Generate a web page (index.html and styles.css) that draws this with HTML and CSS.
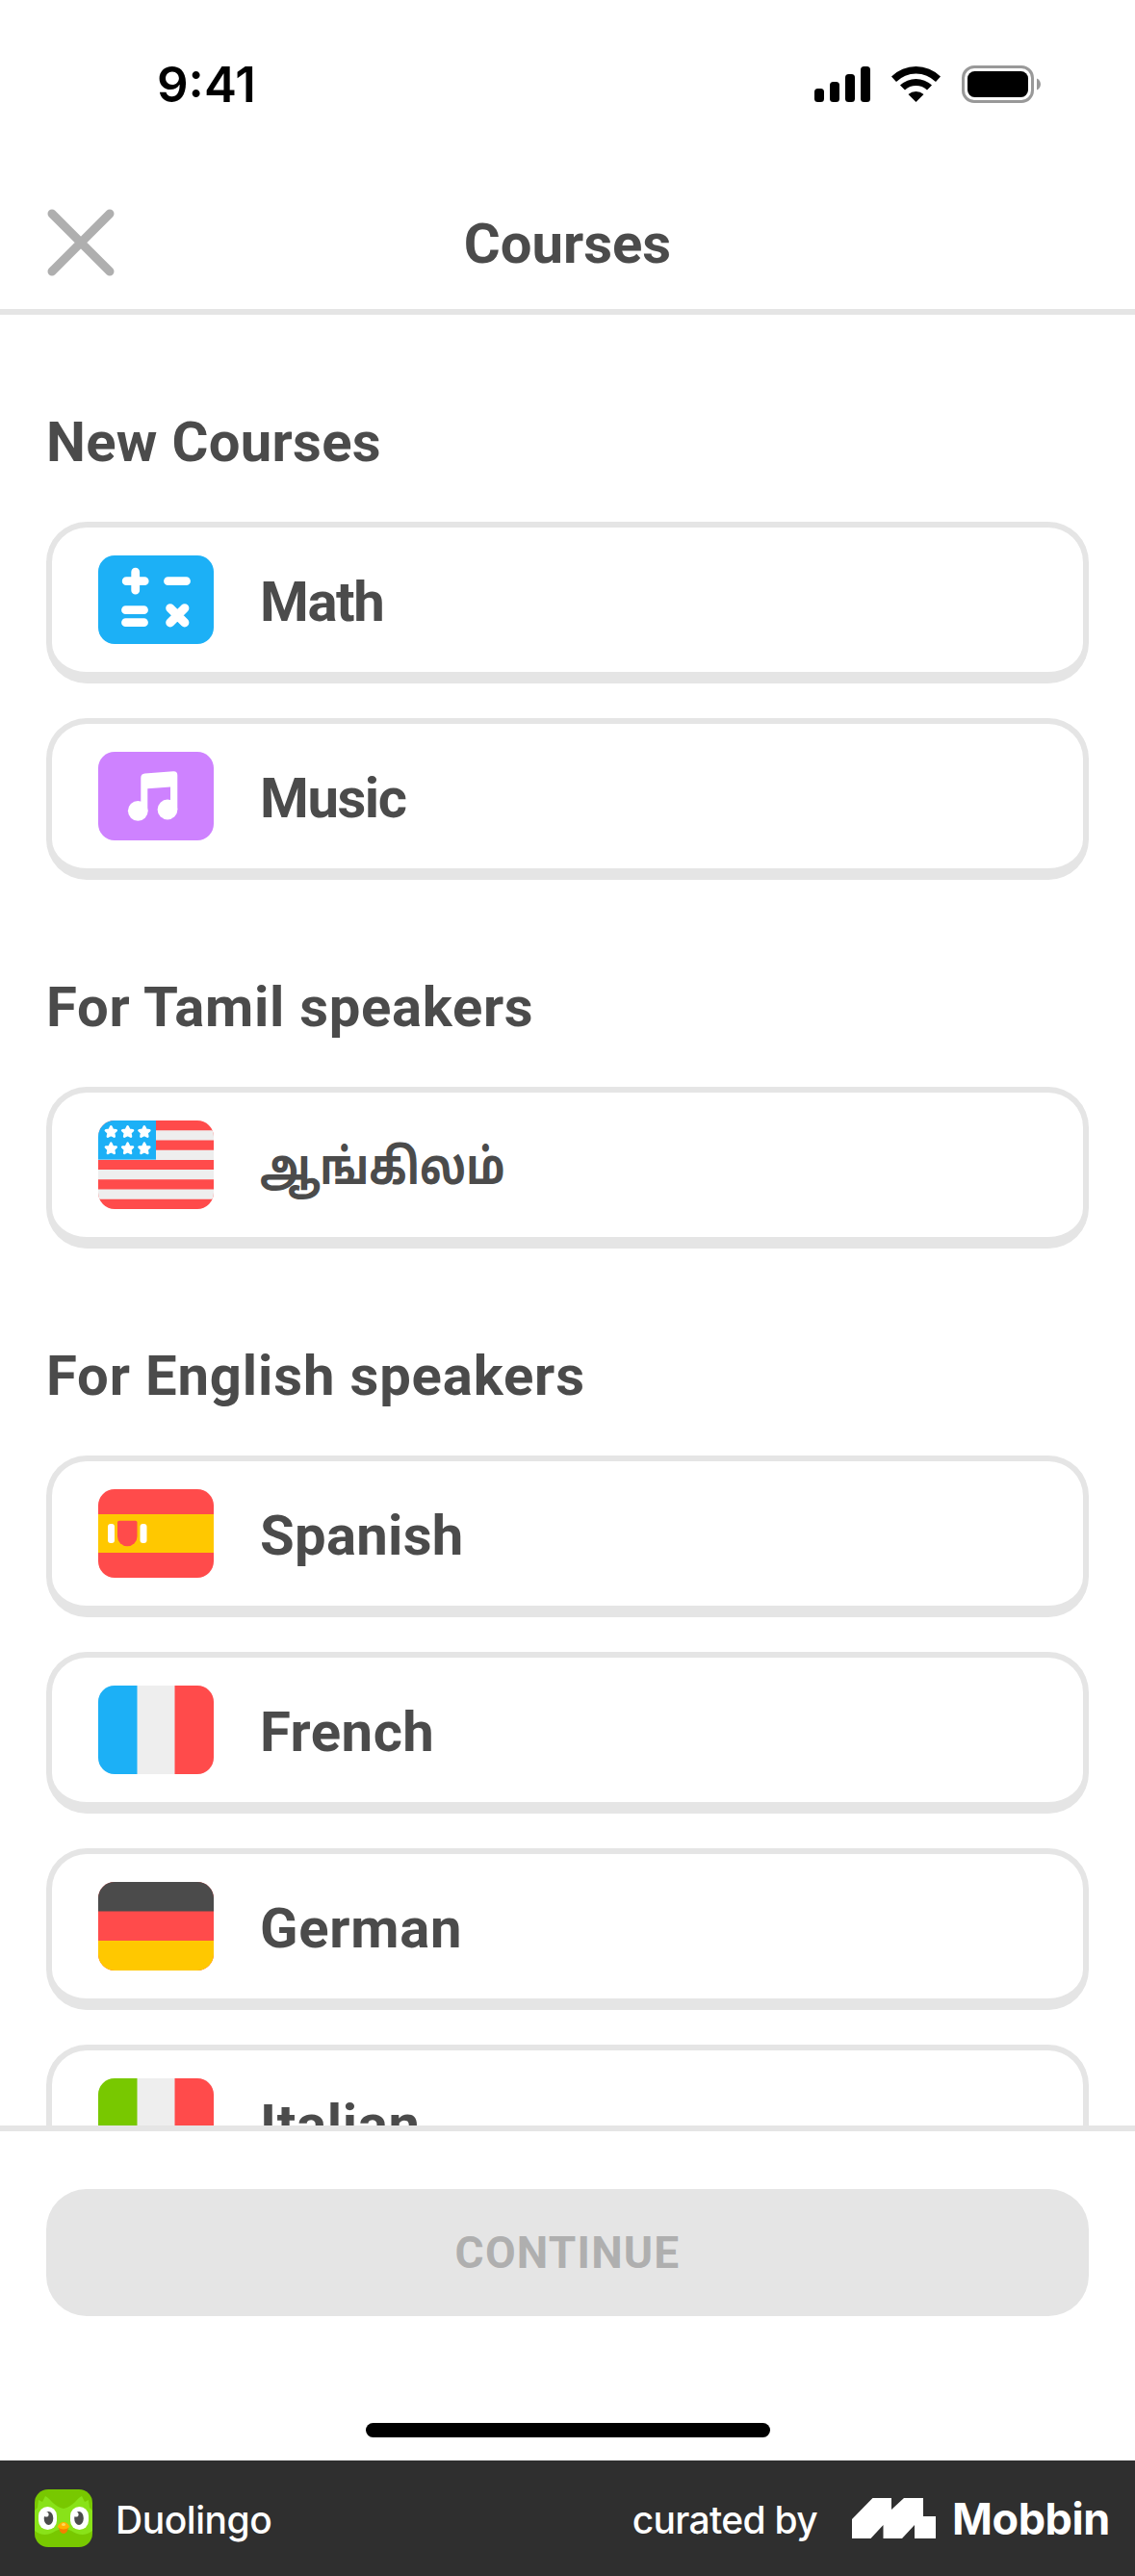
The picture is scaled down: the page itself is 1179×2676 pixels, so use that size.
FILE: index.html
```html
<!DOCTYPE html>
<html lang="en">
<head>
<meta charset="utf-8">
<title>Courses</title>
<link rel="stylesheet" href="styles.css">
</head>
<body>
<div class="screen">
  <div class="status">
    <span class="time">9:41</span>
    <svg class="status-icons" width="238" height="42" viewBox="0 0 238 42">
      <rect x="2" y="25" width="10" height="14" rx="3.5"/>
      <rect x="18" y="18" width="10" height="21" rx="3.5"/>
      <rect x="34" y="10" width="10" height="29" rx="3.5"/>
      <rect x="50" y="2" width="10" height="37" rx="3.5"/>
      <path d="M82 12.500A36.500 36.500 0 0 1 133 12.500L128 18A29 29 0 0 0 87 18Z"/>
      <path d="M91 21.500A24 24 0 0 1 124 21.500L119 26.500A17 17 0 0 0 96 26.500Z"/>
      <path d="M99.500 31A12 12 0 0 1 115.500 31L107.500 39Z"/>
      <rect class="battery-shell" x="156.500" y="2.500" width="72" height="36" rx="11.500"/>
      <rect x="161" y="7" width="63" height="27" rx="7.500"/>
      <path class="battery-nub" d="M233 14.500C238.300 16.500 238.300 24.500 233 26.500Z"/>
    </svg>
  </div>
  <header class="header">
    <svg class="close" width="70" height="70" viewBox="0 0 70 70"><path d="M5 5L65 65M65 5L5 65"/></svg>
    <h1 class="title">Courses</h1>
  </header>
  <main class="content">
    <section class="group">
      <h2 class="heading h-new">New Courses</h2>
      <div class="card">
        <svg class="flag" viewBox="0 0 120 92">
          <rect width="120" height="92" fill="#1cb0f6"/>
          <g stroke="#fff" stroke-width="8.800" stroke-linecap="round">
            <path d="M38.700 17.200V36.200M29.200 26.700H48.200M72.500 26.700H91.500M28.500 56.700H47.500M28.500 69.700H47.500"/>
            <path d="M74.800 54.800L89.800 69.800M89.800 54.800L74.800 69.800" stroke-width="9.200"/>
          </g>
        </svg>
        <span class="label l-math">Math</span>
      </div>
      <div class="card">
        <svg class="flag" viewBox="0 0 120 92">
          <rect width="120" height="92" fill="#ce82ff"/>
          <g fill="#fff">
            <circle cx="41.300" cy="61.300" r="10.400"/><circle cx="72" cy="60" r="10.400"/>
            <path d="M44.300 61V27Q44.300 22.700 48.500 22.400L78 20.300Q82.300 20 82.300 24.300V60H75V36.400L51.300 38.300V61Z"/>
          </g>
        </svg>
        <span class="label l-music">Music</span>
      </div>
    </section>
    <section class="group">
      <h2 class="heading h-tamil">For Tamil speakers</h2>
      <div class="card">
        <svg class="flag" viewBox="0 0 120 92">
          <defs><path id="star" d="M0-5.500L1.700-2 5.400-1.600 2.700 1 3.400 4.700 0 2.900-3.400 4.700-2.700 1-5.400-1.600-1.700-2Z" fill="#fff" stroke="#fff" stroke-width="2.600" stroke-linejoin="round"/></defs>
          <rect width="120" height="92" fill="#ff4b4b"/>
          <path d="M0 15.330H120M0 35.780H120M0 56.220H120M0 76.670H120" stroke="#eee" stroke-width="10.220"/>
          <rect width="60" height="40.600" fill="#1cb0f6"/>
          <use href="#star" x="13.300" y="11.900"/><use href="#star" x="30.600" y="11.900"/><use href="#star" x="47.900" y="11.900"/>
          <use href="#star" x="13.300" y="29.200"/><use href="#star" x="30.600" y="29.200"/><use href="#star" x="47.900" y="29.200"/>
        </svg>
        <span class="label l-tamil" lang="ta">ஆங்கிலம்</span>
      </div>
    </section>
    <section class="group">
      <h2 class="heading h-english">For English speakers</h2>
      <div class="card">
        <svg class="flag" viewBox="0 0 120 92">
          <rect width="120" height="92" fill="#ff4b4b"/>
          <rect y="26" width="120" height="40" fill="#ffc800"/>
          <path d="M20 34.500Q20 32.700 21.800 32.700H38.700Q40.500 32.700 40.500 34.500V49A10.250 10.250 0 0 1 20 49Z" fill="#ff4b4b"/>
          <rect x="10" y="36" width="7" height="20" rx="3" fill="#fff"/>
          <rect x="43.500" y="36" width="7" height="20" rx="3" fill="#fff"/>
        </svg>
        <span class="label l-spanish">Spanish</span>
      </div>
      <div class="card">
        <svg class="flag" viewBox="0 0 120 92">
          <rect width="120" height="92" fill="#eee"/>
          <rect width="40.500" height="92" fill="#1cb0f6"/><rect x="79.500" width="40.500" height="92" fill="#ff4b4b"/>
        </svg>
        <span class="label l-french">French</span>
      </div>
      <div class="card">
        <svg class="flag" viewBox="0 0 120 92">
          <rect width="120" height="92" fill="#ff4b4b"/>
          <rect width="120" height="30.500" fill="#4b4b4b"/><rect y="61" width="120" height="31" fill="#ffc800"/>
        </svg>
        <span class="label l-german">German</span>
      </div>
      <div class="card">
        <svg class="flag" viewBox="0 0 120 92">
          <rect width="120" height="92" fill="#eee"/>
          <rect width="40.500" height="92" fill="#78c800"/><rect x="79.500" width="40.500" height="92" fill="#ff4b4b"/>
        </svg>
        <span class="label l-italian">Italian</span>
      </div>
    </section>
  </main>
  <div class="actions">
    <button class="continue" disabled>CONTINUE</button>
    <div class="home-indicator"></div>
  </div>
  <footer class="credit">
    <svg class="app-icon" width="60" height="60" viewBox="0 0 60 60">
      <rect width="60" height="60" fill="#78c800"/>
      <path d="M3 19L4 11 8 13 11 7C17 10 20 18 30 20C40 18 43 10 49 7L52 13 56 11 57 19 60 22V43Q50 51 38 43L30 40 22 43Q10 51 0 43V22Z" fill="#89e219"/>
      <rect x="4" y="18" width="19" height="24" rx="9.500" fill="#fff"/><rect x="37" y="18" width="19" height="24" rx="9.500" fill="#fff"/>
      <ellipse cx="14.500" cy="30" rx="4.800" ry="7" fill="#4b4b4b"/><ellipse cx="46" cy="30" rx="4.800" ry="7" fill="#4b4b4b"/>
      <circle cx="12" cy="26" r="2.600" fill="#fff"/><circle cx="43" cy="26" r="2.600" fill="#fff"/>
      <path d="M25 40H35L33.500 44Q30 48 26.500 44Z" fill="#f57f00"/>
      <path d="M23.500 39Q26 34 30 34T36.500 39Q33 41.500 30 41.500T23.500 39Z" fill="#ffb100"/><ellipse cx="30" cy="36.500" rx="2" ry="1.500" fill="#ffd95a"/>
    </svg>
    <span class="app-name">Duolingo</span>
    <span class="curated">curated by</span>
    <svg class="mobbin-logo" width="88" height="42" viewBox="0 0 88 42"><path d="M0 22L21.500 0H41V12L54 0H74V19H87V42H65V28L52 42H32.500V28L19.500 42H0Z" fill="#fff"/></svg>
    <span class="mobbin">Mobbin</span>
  </footer>
</div>
</body>
</html>
```
FILE: styles.css
```css
* { box-sizing: border-box; }
body { margin: 0; background: #fff; }

.screen {
  width: 1179px;
  height: 2676px;
  display: flex;
  flex-direction: column;
  overflow: hidden;
  font-family: Roboto, "Noto Sans", sans-serif;
  color: #4b4b4b;
}

.status {
  flex: none;
  height: 177px;
  padding: 0 97px 0 163px;
  display: flex;
  justify-content: space-between;
  align-items: flex-start;
  color: #000;
}
.time {
  font: 600 51px/60px Inter, sans-serif;
  margin-top: 58px;
  letter-spacing: 0;
}
.status-icons { margin-top: 67px; }
.battery-shell { fill: none; stroke: #999; stroke-width: 3; }
.battery-nub { fill: #999; }

.header {
  flex: none;
  height: 150px;
  border-bottom: 6px solid #e5e5e5;
  padding: 6px 49px 0;
  display: grid;
  grid-template-columns: 70px 1fr 70px;
  align-items: center;
}
.close { fill: none; stroke: #afafaf; stroke-width: 9; stroke-linecap: round; }
.title { margin: 2px 0 0; text-align: center; font-size: 58px; line-height: 68px; font-weight: 700; }

.content { flex: none; height: 1881px; overflow: hidden; padding: 0 48px; }
.group { padding-top: 97px; }
.heading { margin: 0 0 48px; font-size: 58px; line-height: 70px; font-weight: 700; white-space: nowrap; }
.h-new { letter-spacing: 0.3px; }
.h-tamil { letter-spacing: 0.7px; }
.h-english { letter-spacing: 0.85px; }

.card {
  height: 168px;
  border: 6px solid #e5e5e5;
  border-bottom-width: 12px;
  border-radius: 42px;
  padding-left: 48px;
  display: flex;
  align-items: center;
  gap: 48px;
}
.card + .card { margin-top: 36px; }
.flag { flex: none; width: 120px; height: 92px; border-radius: 17px; }
.label { padding-top: 3px; font-size: 58px; line-height: 68px; font-weight: 700; white-space: nowrap; }
.l-math { letter-spacing: -1.4px; }
.l-music { letter-spacing: -1.4px; }
.l-spanish { letter-spacing: 0.3px; }
.l-french { letter-spacing: 0.5px; }
.l-german { letter-spacing: 0.7px; }
.l-italian { letter-spacing: 0.7px; }
.l-tamil {
  padding-top: 15px;
  font-family: "Noto Sans Tamil", Roboto, sans-serif;
  font-size: 51px;
  transform: scaleX(0.845);
  transform-origin: left;
}

.actions {
  flex: none;
  height: 348px;
  border-top: 6px solid #e5e5e5;
  padding: 60px 48px 24px;
  display: flex;
  flex-direction: column;
  align-items: center;
  justify-content: space-between;
}
.continue {
  width: 100%;
  height: 132px;
  border: 0;
  border-radius: 42px;
  background: #e5e5e5;
  color: #afafaf;
  font: 700 46px/54px Roboto, sans-serif;
  letter-spacing: 1.2px;
}
.home-indicator { width: 420px; height: 15px; border-radius: 8px; background: #000; }

.credit {
  flex: none;
  height: 120px;
  padding: 0 26px 0 36px;
  display: flex;
  align-items: center;
  background: #2f2f2f;
  color: #fff;
  font-family: Inter, sans-serif;
  white-space: nowrap;
}
.app-icon { border-radius: 14px; }
.app-name, .curated { padding-top: 2px; font-size: 39px; font-weight: 500; }
.app-name { margin-left: 24px; letter-spacing: -0.45px; }
.curated { margin-left: auto; letter-spacing: -0.7px; }
.mobbin-logo { margin-left: 36px; }
.mobbin { margin-left: 16px; font-size: 45px; font-weight: 700; letter-spacing: -0.4px; }
```
